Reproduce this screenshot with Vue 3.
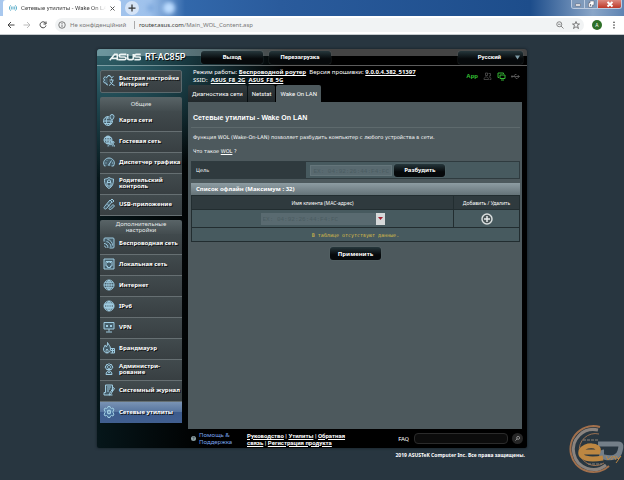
<script setup>
import { ref } from 'vue'

const general = [
  { icon: 'globe', label: 'Карта сети' },
  { icon: 'guest', label: 'Гостевая сеть' },
  { icon: 'gauge', label: 'Диспетчер трафика' },
  { icon: 'shield', label: 'Родительский контроль' },
  { icon: 'usb', label: 'USB-приложение' },
]
const advanced = [
  { icon: 'wifi', label: 'Беспроводная сеть' },
  { icon: 'lan', label: 'Локальная сеть' },
  { icon: 'net', label: 'Интернет' },
  { icon: 'ipv6', label: 'IPv6' },
  { icon: 'vpn', label: 'VPN' },
  { icon: 'fire', label: 'Брандмауэр' },
  { icon: 'admin', label: 'Администри-\nрование' },
  { icon: 'log', label: 'Системный журнал' },
  { icon: 'tools', label: 'Сетевые утилиты', active: true },
]
const groups = [
  { title: 'Общие', items: general },
  { title: 'Дополнительные настройки', items: advanced },
]
const gear = 'M10 1h4l1 3 2 1 3-1 2 4-2 2v4l2 2-2 4-3-1-2 1-1 3h-4l-1-3-2-1-3 1-2-4 2-2v-4L2 8l2-4 3 1 2-1z'
const sphere = 'M12 2a10 10 0 1 0 .1 0zM2 12h20M4 6.500h16M4 17.500h16M12 2v20M12 2c-6 5-6 15 0 20M12 2c6 5 6 15 0 20'
const icons = {
  quick: 'M9 4l1-3h4l1 3 3 1 3-2M9 4L6 5 4 3 1 7l2 3-2 3 2 3 3 0 1 3 3 1M13 10h8M17 7v3M20 10c-1 6-4 9-8 11M14 13c2 4 5 7 9 8',
  globe: 'M11 5a9 9 0 1 0 8 9M2 14h17M5 8h8M4 19h14M11 5c-6 5-6 13 0 18M11 23c4-3 5-6 5-9M18 1a4 4 0 0 1 4 4c0 3-4 8-4 8s-4-5-4-8a4 4 0 0 1 4-4z',
  guest: 'M10 2a8 8 0 1 0 .1 0zM2 10h16M4 5h12M10 2v16M10 2c-5 4-5 12 0 16M10 2c5 4 5 12 0 16M15 12a3 3 0 1 0 .1 0zM20 13a2 2 0 1 0 .1 0zM10 23c0-6 10-6 10 0M19 19c3 0 4 1 4 4',
  gauge: 'M5 20H3C-2 11 5 4 12 4s14 7 9 16h-4M12 17l5-8M10 18h4M5 14h2M8 9l1 1M18 14h2',
  shield: 'M12 1c3 2 6 3 9 3 0 10-2 15-9 19C5 19 3 14 3 4c3 0 6-1 9-3zM8 11h8v7H8zM9 11V8c0-3 6-3 6 0v3',
  usb: 'M3 17L14 4l4 4L7 21c-3 3-7-1-4-4zM15 5l3-3 4 4-3 3M9 13l4 3M12 21l8-8 3 3-6 6c-2 2-5 1-5-1',
  wifi: 'M13 22h7a2 2 0 0 0 2-2V4a2 2 0 0 0-2-2H4a2 2 0 0 0-2 2v5M2 13c5 0 8 4 8 9M2 18c2 0 4 2 4 4M7 9c5 1 9 6 9 11M9 5c6 1 10 6 10 12',
  lan: 'M2 2h20v20H2zM6 7h12v9h-3v3H9v-3H6zM9 7v3M12 7v3M15 7v3',
  net: sphere,
  ipv6: sphere + 'M3 9h18v6H3z',
  vpn: 'M2 3h20v13H2zM12 16v5M6 22h12M6 8l4 4M10 8l-4 4M14 8l4 4M18 8l-4 4',
  fire: 'M9 1c2 5 6 6 6 13 0 5-3 8-7 8s-7-3-7-8c0-4 3-5 3-8 2 1 2 3 2 4 3-2 3-5 3-9zM8 14c-3 3-2 7 0 8 3-2 3-5 0-8zM16 13h7v9h-8M16 17h7M19 13v9',
  admin: 'M12 1l2 2 3 0 1 3 2 2-2 3-1 2H7l-1-2-2-3 2-2 1-3 3 0zM12 5a3 3 0 1 0 .1 0zM6 23c0-10 12-10 12 0zM10 17l2 3 2-3',
  log: 'M5 2h14v14M5 2v15H2v5h17M8 6h8M8 10h6M8 14h4M13 19l8-12 2 2-8 12-3 1z',
  tools: gear + 'M9 9v6h6V9zM12 7v10',
}
const tabs = ['Диагностика сети', 'Netstat', 'Wake On LAN']
const activeTab = ref('Wake On LAN')
const target = ref('')
const client = ref('')
const query = ref('')
</script>

<template>
  <div class="window">
    <header class="chrome">
      <div class="strip">
        <div class="browser-tab">
          <svg class="ic8" viewBox="0 0 24 24" fill="none" stroke="#3d9fc0" stroke-width="2.500"><path d="M5 4c-5 5-5 11 0 16M19 4c5 5 5 11 0 16M9 7c-3 3-3 7 0 10M15 7c3 3 3 7 0 10M12 9v6" /></svg>
          <span class="tab-title">Сетевые утилиты - Wake On LAN</span>
          <button class="plain" aria-label="Закрыть вкладку"><svg class="ic5" viewBox="0 0 10 10" stroke="#555" stroke-width="2"><path d="M1 1l8 8M9 1L1 9" /></svg></button>
        </div>
        <button class="new-tab" aria-label="Новая вкладка"><svg class="ic8" viewBox="0 0 16 16" stroke="#333" stroke-width="2.500"><path d="M8 1v14M1 8h14" /></svg></button>
        <i class="glow"></i><i class="glow bright"></i>
        <div class="win-buttons">
          <button aria-label="Свернуть"><svg class="ic8" viewBox="0 0 16 16"><path d="M3 8h10v4H3z" fill="#fff" stroke="#556" /></svg></button>
          <button aria-label="Развернуть"><svg class="ic8" viewBox="0 0 16 16"><path d="M6 2h8v8h-3v4H3V6h3zM6 9h2v2H6z" fill="#fff" stroke="#556" fill-rule="evenodd" /></svg></button>
          <button class="close" aria-label="Закрыть"><svg class="ic8" viewBox="0 0 16 16" stroke="#fff" stroke-width="4"><path d="M3 4l10 9M13 4L3 13" /></svg></button>
        </div>
      </div>
      <div class="toolbar">
        <button class="plain" aria-label="Назад"><svg class="ic8" viewBox="0 0 16 16" fill="none" stroke="#444" stroke-width="2"><path d="M15 8H2M8 2L2 8l6 6" /></svg></button>
        <button class="plain" aria-label="Вперёд"><svg class="ic8" viewBox="0 0 16 16" fill="none" stroke="#bbb" stroke-width="2"><path d="M1 8h13M8 2l6 6-6 6" /></svg></button>
        <button class="plain" aria-label="Обновить"><svg class="ic8" viewBox="0 0 16 16" fill="none" stroke="#444" stroke-width="2"><path d="M14 9a6 6 0 1 1-2-6l2 2M14 1v5H9" /></svg></button>
        <div class="address">
          <svg class="ic8" viewBox="0 0 16 16" fill="none" stroke="#555" stroke-width="1.500"><circle cx="8" cy="8" r="6.500" /><path d="M8 7v5M8 4v2" /></svg>
          <span class="insecure">Не конфіденційний</span>
          <i class="bar"></i>
          <span class="url">router.asus.com<span class="path">/Main_WOL_Content.asp</span></span>
          <span class="actions">
            <svg class="ic8" viewBox="0 0 16 16" fill="none" stroke="#666" stroke-width="1.500"><circle cx="6.500" cy="6.500" r="5" /><path d="M10 10l5 5M4 6.500h5" /></svg>
            <svg class="ic8" viewBox="0 0 16 16" fill="none" stroke="#555" stroke-width="1.500"><path d="M8 1l2 5h5l-4 3 2 6-5-3.500L3 15l2-6-4-3h5z" /></svg>
          </span>
        </div>
        <span class="avatar">A</span>
        <svg class="ic8" viewBox="0 0 16 16" fill="#555"><circle cx="8" cy="2.500" r="1.700" /><circle cx="8" cy="8" r="1.700" /><circle cx="8" cy="13.500" r="1.700" /></svg>
      </div>
    </header>

    <div class="page">
      <div class="router">
        <div class="top">
          <svg class="logo" viewBox="0 0 96 24" aria-label="ASUS" fill="none" stroke="#eef4f4" stroke-width="5"><path d="M2 22L17 4h9M7 16h17M25 4v18M52 4H36q-5 0-5 4t5 4h10q5 0 5 4t-5 4H28M56 3v12q0 5 5 5h7q5 0 5-5V3M95 4H82q-5 0-5 4t5 4h8q5 0 5 4t-5 4H76" /></svg>
          <span class="model">RT-AC85P</span>
          <div class="top-buttons">
            <button class="dark-btn">Выход</button>
            <button class="dark-btn">Перезагрузка</button>
          </div>
          <button class="dark-btn lang">Русский<svg class="ic5" viewBox="0 0 10 10" fill="#7d9aa5"><path d="M0 1h10L5 9z" /></svg></button>
        </div>

        <div class="body">
          <nav class="sidebar">
            <a class="item quick" href="#">
              <svg class="mi" viewBox="0 0 24 24"><path :d="icons.quick" /></svg>
              <span>Быстрая настройка Интернет</span>
            </a>
            <section v-for="g in groups" :key="g.title" class="group">
              <h2>{{ g.title }}</h2>
              <a v-for="i in g.items" :key="i.label" class="item" :class="{ active: i.active }" href="#">
                <svg class="mi" viewBox="0 0 24 24"><path :d="icons[i.icon]" /></svg>
                <span>{{ i.label }}</span>
              </a>
            </section>
          </nav>

          <main>
            <div class="status">
              <div class="info">
                <div>Режим работы: <a href="#">Беспроводной роутер</a>&nbsp; Версия прошивки: <a href="#">9.0.0.4.382_51397</a></div>
                <div>SSID:&nbsp; <a href="#">ASUS_F8_2G</a>&nbsp; <a href="#">ASUS_F8_5G</a></div>
              </div>
              <div class="indicators">
                <span class="app">App</span>
                <svg class="ic9" viewBox="0 0 18 18" fill="none" stroke="#555" stroke-width="1.500"><path d="M5 2h4v5H5zM2 15c0-7 9-7 9 0zM11 3h4v5h-3M12 10c3 0 4 2 4 5h-3" /></svg>
                <svg class="ic9" viewBox="0 0 18 18" fill="none" stroke="#35b535" stroke-width="2"><path d="M4 11H2V2h11v2M6 6h10v7H6zM8 16h6" /></svg>
                <svg class="ic9" viewBox="0 0 18 18" fill="none" stroke="#666" stroke-width="1.500"><path d="M2 9h14M5 9l3-4h3M7 9l3 4h3M14 7l3 2-3 2z" /><circle cx="2" cy="9" r="1.500" fill="#666" /></svg>
              </div>
            </div>
            <div class="tabs" role="tablist">
              <button v-for="t in tabs" :key="t" role="tab" :aria-selected="t === activeTab" :class="{ on: t === activeTab }" @click="activeTab = t">{{ t }}</button>
            </div>
            <div class="panel">
              <h1>Сетевые утилиты - Wake On LAN</h1>
              <p>Функция WOL (Wake-On-LAN) позволяет разбудить компьютер с любого устройства в сети.</p>
              <p>Что такое <a href="#">WOL</a> ?</p>
              <form class="target" @submit.prevent>
                <label for="mac">Цель</label>
                <div class="field">
                  <input id="mac" v-model="target" placeholder="EX: 04:92:26:44:F4:FC">
                  <button class="dark-btn">Разбудить</button>
                </div>
              </form>
              <table>
                <caption>Список офлайн (Максимум : 32)</caption>
                <thead><tr><th>Имя клиента (MAC-адрес)</th><th class="act">Добавить / Удалить</th></tr></thead>
                <tbody>
                  <tr class="entry">
                    <td>
                      <div class="combo">
                        <input v-model="client" aria-label="Имя клиента" placeholder="EX: 04:92:26:44:F4:FC">
                        <button aria-label="Выбрать клиента"><svg class="ic5" viewBox="0 0 10 10" fill="#a02030"><path d="M0 2h10L5 8z" /></svg></button>
                      </div>
                    </td>
                    <td><button class="plain add" aria-label="Добавить"><svg viewBox="0 0 24 24"><circle cx="12" cy="12" r="10" fill="#4a5558" stroke="#d8dddd" stroke-width="3" /><path d="M12 6v12M6 12h12" stroke="#e8ecec" stroke-width="3" /></svg></button></td>
                  </tr>
                  <tr><td class="empty" colspan="2">В таблице отсутствуют данные.</td></tr>
                </tbody>
              </table>
              <button class="dark-btn apply">Применить</button>
            </div>
          </main>
        </div>

        <footer>
          <svg class="ic5" viewBox="0 0 14 14"><circle cx="7" cy="7" r="7" fill="#8fa3a8" /><path d="M5 5q0-2 2-2t2 2q0 1-2 3M7 10v1.500" fill="none" stroke="#10181c" stroke-width="1.500" /></svg>
          <span class="help">Помощь &amp; Поддержка</span>
          <span class="links"><a href="#">Руководство</a> | <a href="#">Утилиты</a> | <a href="#">Обратная связь</a> | <a href="#">Регистрация продукта</a></span>
          <label for="faq">FAQ</label>
          <input id="faq" v-model="query">
          <button class="search" aria-label="Поиск"><svg class="ic5" viewBox="0 0 12 12" fill="none" stroke="#ccc" stroke-width="1.500"><circle cx="7.500" cy="4.500" r="3.500" /><path d="M5 7l-4 4" /></svg></button>
        </footer>
      </div>
      <div class="copyright">2019 ASUSTeK Computer Inc. Все права защищены.</div>
    </div>

    <svg class="mark" viewBox="0 0 60 50" fill="none" aria-hidden="true">
      <path d="M36 3A23 23 0 1 0 45 42" stroke="#a2704c" stroke-width="2" />
      <path d="M34 6A20 20 0 1 0 42 41" stroke="#8a837e" stroke-width="3" />
      <path d="M35 10A16 16 0 1 0 40 39" stroke="#9b7050" stroke-width="1" />
      <path d="M34 20h20c4 0 3 3 2 7-1 6-8 8-16 6-4-1-2-5 0-5" stroke="#747f88" stroke-width="5" />
      <path d="M18 28h16c3-8-14-8-17-1-2 8 9 9 22 7" stroke="#bd8742" stroke-width="5" />
      <path d="M42 32l2 4 4-4M47 36l3-4 2 4M52 32l2 3 3-3-5 7" stroke="#bd8742" stroke-width="1" />
      <path d="M19 16h15M24 40h14" stroke="#8b8279" stroke-width="1" stroke-dasharray="3 1" />
    </svg>
  </div>
</template>

<style>
body { margin: 0; background: #283640; }
</style>

<style scoped>
* { box-sizing: border-box; }
.window { position: relative; min-height: 100vh; background: #283640; font: 6px/8px Roboto, "Liberation Sans", sans-serif; color: #fff; }
button, input { font: inherit; color: inherit; border: 0; padding: 0; margin: 0; min-width: 0; }
a { color: inherit; }
svg { display: block; flex: none; }
.plain { background: none; display: flex; }
.ic5 { width: 5px; height: 5px; }
.ic8 { width: 8px; height: 8px; }
.ic9 { width: 9px; height: 9px; }

.strip { display: flex; align-items: center; height: 16px; padding-left: 3px; background: linear-gradient(90deg, #a9c8ee 0, #9fc2ec 150px, #3268ab 185px, #2a5b9c 45%, #1d4d8b 85%, #8aa6c8 95%, #5e83b2); }
.browser-tab { display: flex; align-items: center; gap: 4px; width: 118px; height: 16px; padding: 0 6px; background: #fff; border-radius: 3px 3px 0 0; }
.tab-title { flex: 1; overflow: hidden; white-space: nowrap; color: #444; -webkit-mask-image: linear-gradient(90deg, #000 85%, transparent); mask-image: linear-gradient(90deg, #000 85%, transparent); }
.new-tab { display: flex; align-items: center; justify-content: center; width: 14px; height: 14px; margin-left: 4px; border-radius: 50%; background: #d5e4f7; }
.glow { width: 8px; height: 8px; margin-left: 8px; border-radius: 50%; background: #81abde; filter: blur(2px); }
.glow.bright { width: 12px; height: 12px; background: #bcdcff; }
.win-buttons { display: flex; align-self: flex-start; margin-left: auto; margin-right: 2px; height: 9px; border: 1px solid #bccbe0; border-top: 0; border-radius: 0 0 3px 3px; overflow: hidden; }
.win-buttons button { display: flex; align-items: center; justify-content: center; width: 13px; background: #7f9abb; border-right: 1px solid #bccbe0; }
.win-buttons .close { width: 23px; background: linear-gradient(#dc8a80, #bd3828); border: 0; }
.toolbar { display: flex; align-items: center; gap: 8px; height: 19px; padding: 0 6px 0 7px; background: #fff; border-bottom: 1px solid #c5cacd; }
.address { flex: 1; display: flex; align-items: center; gap: 4px; height: 14px; padding: 0 4px 0 3px; border-radius: 7px; background: #f1f3f4; font: 6px/10px "Noto Sans", sans-serif; color: #333; }
.insecure { min-width: 60px; }
.insecure, .path { color: #777; }
.bar { width: 1px; height: 8px; background: #aaa; }
.url { flex: 1; }
.actions { display: flex; gap: 8px; }
.avatar { width: 10px; height: 10px; border-radius: 50%; background: #2e7028; font-size: 5px; line-height: 10px; text-align: center; }

.page { padding: 14px 97px 0; }
.router { border-radius: 3px 3px 2px 2px; overflow: hidden; box-shadow: 0 0 3px #111a20; background: radial-gradient(ellipse 190px 130px at 0 0, #39737d 0, #1d444d 45%, transparent), linear-gradient(90deg, #06161a, #000 25%); }
.top { display: flex; align-items: center; gap: 4px; height: 17px; padding: 0 4px 0 12px; background: linear-gradient(#fff4 0, #fff4 7px, #0002 7px, #0002); border-bottom: 1px solid #ffffff22; }
.logo { width: 32px; height: 8px; }
.model { width: 52px; font: 500 9px/10px Roboto, sans-serif; text-shadow: 1px 1px #111; }
.top-buttons { display: flex; gap: 6px; }
.dark-btn { width: 62px; height: 13px; border-radius: 3px; background: linear-gradient(#26373c, #06090b 60%); box-shadow: 0 0 1px #7c8c90; font-weight: bold; text-align: center; }
.lang { display: flex; align-items: center; justify-content: flex-end; gap: 14px; width: 65px; padding-right: 3px; margin-left: auto; }

.body { display: grid; grid-template-columns: 82px 1fr; gap: 6px; padding: 4px 5px 0 3px; }
.sidebar { display: flex; flex-direction: column; gap: 4px; }
.item { display: flex; align-items: center; gap: 4px; height: 21px; padding: 0 0 2px 3px; background: linear-gradient(#414a4d, #383f42); border-bottom: 1px solid #666f72; text-decoration: none; white-space: pre-line; font: bold 6px/6px "Noto Sans", sans-serif; text-shadow: 1px 1px #111; }
.quick { height: 23px; padding-left: 2px; border: 1px solid #5c696d; border-radius: 2px; }
.mi { width: 12px; height: 12px; fill: #5a9cc444; stroke: #9fcbe0; stroke-width: 2; }
.active { background: linear-gradient(#7993b4 0, #5876a0 45%, #3d5b8c 50%, #415f90); border: 0; }
.group { border-radius: 2px 2px 0 0; overflow: hidden; }
.group h2 { display: flex; align-items: center; justify-content: center; height: 14px; margin: 0; padding: 0 12px; background: linear-gradient(#596467, #434c4f); font: 6px/6px "Noto Sans", sans-serif; text-align: center; color: #e5e9ea; }

main { display: flex; flex-direction: column; min-width: 0; }
.status { display: flex; justify-content: space-between; height: 16px; padding: 0 2px 0 5px; margin-top: -2px; }
.info { font: 6px/8px "Noto Sans", sans-serif; white-space: nowrap; }
.info a { font-weight: bold; }
.indicators { display: flex; align-items: center; gap: 5px; height: 16px; }
.app { font: bold 6px/8px "Liberation Sans", sans-serif; color: #35c535; }
.tabs { display: flex; gap: 1px; height: 18px; padding-top: 1px; }
.tabs button { padding: 0 4px; border-radius: 2px 2px 0 0; background: linear-gradient(#30393c, #21282b); }
.tabs .on { background: #4d595d; }
.panel { flex: 1; padding: 10px 2px 169px 3px; background: #4d595d; }
h1 { margin: 0 0 5px; padding: 0 2px 4px; border-bottom: 1px solid #5e6a6d; font: bold 7px/11px "Liberation Sans", sans-serif; }
p { margin: 0 0 5px; padding-left: 2px; font: 5px/9px "DejaVu Sans", sans-serif; }
.target { display: flex; height: 18px; margin-bottom: 4px; border: 1px solid #2f3b3f; background: #475a5f; }
.target label { display: flex; align-items: center; width: 35%; padding-left: 4px; background: #2f3a3e; font: 5px/8px "DejaVu Sans", sans-serif; }
.field { display: flex; align-items: center; gap: 2px; padding-left: 4px; }
.field input { width: 82px; height: 11px; padding: 0 2px; background: #596a70; border: 1px solid #64757a; }
input::placeholder { color: #4b5c61; opacity: 1; font: 6px/8px "Liberation Mono", monospace; }
.field .dark-btn, .apply { width: 51px; font-family: "Noto Sans", sans-serif; }
table { width: 100%; border-collapse: collapse; table-layout: fixed; background: #475a5f; }
caption { height: 12px; padding-left: 5px; background: linear-gradient(#8e9da3, #657378); text-align: left; font: bold 6px/12px "Noto Sans", sans-serif; }
th, td { padding: 0; height: 14px; border: 1px solid #222d30; text-align: center; }
th { background: #2f3a3e; font: 5px/8px "Noto Sans", sans-serif; }
.act { width: 66px; }
.entry td { height: 18px; }
.combo { display: flex; width: 124px; height: 12px; margin: 0 auto; }
.combo input { flex: 1; padding: 0 2px; background: #596a70; }
.combo button { display: flex; align-items: center; justify-content: center; width: 9px; background: #d5d8d9; }
.add { margin: 0 auto; width: 12px; }
.add svg { width: 12px; height: 12px; }
.empty { color: #d9bd4a; font: 5px/8px "DejaVu Sans Mono", monospace; }
.apply { display: block; margin: 5px auto 0; }

footer { display: flex; align-items: center; height: 19px; padding: 0 4px 0 94px; line-height: 7px; }
.help { width: 46px; margin-left: 3px; margin-right: 2px; color: #7aa4ee; font-family: "Noto Sans", sans-serif; }
.links { width: 110px; margin-right: auto; font-weight: bold; }
footer input { width: 94px; height: 11px; margin: 0 4px 0 5px; padding: 0 4px; border: 1px solid #2b2b2b; border-radius: 4px; background: #0c0c0c; }
.search { display: flex; align-items: center; justify-content: center; width: 11px; height: 11px; border-radius: 50%; background: #262626; }
.copyright { padding: 3px 2px 0 0; text-align: right; font: bold 5px/8px "Noto Sans", sans-serif; }
.mark { position: absolute; right: 0; bottom: 6px; width: 60px; height: 50px; }
</style>
